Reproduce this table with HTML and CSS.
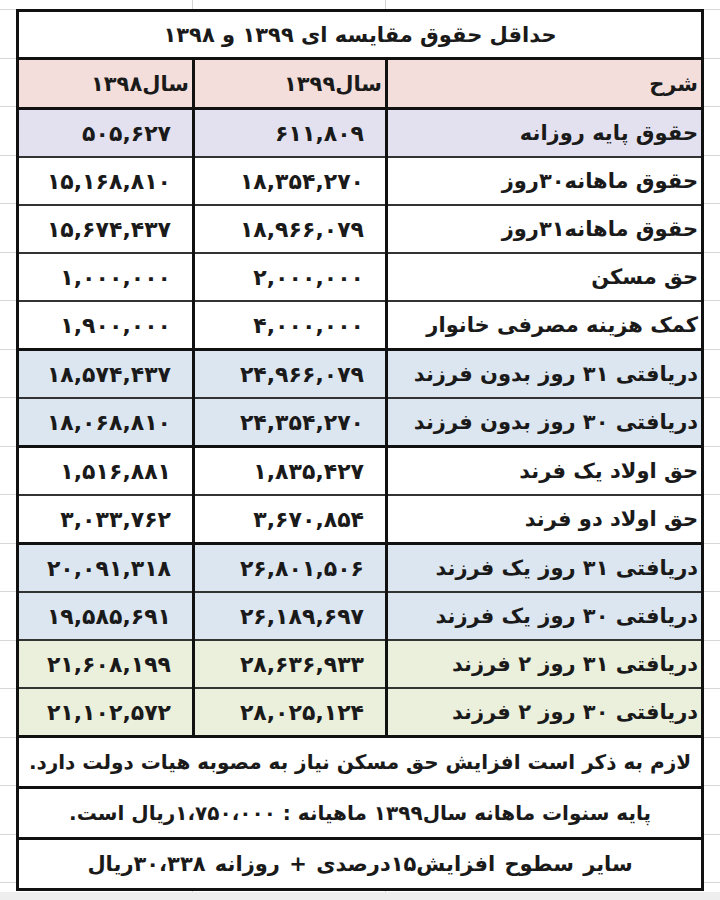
FILE: index.html
```html
<!DOCTYPE html>
<html lang="fa">
<head>
<meta charset="utf-8">
<title>حداقل حقوق مقایسه ای ۱۳۹۹ و ۱۳۹۸</title>
<link rel="stylesheet" href="styles.css">
</head>
<body>
<div class="sheet">
  <table class="wage" dir="rtl">
    <colgroup>
      <col class="c-desc">
      <col class="c-y99">
      <col class="c-y98">
    </colgroup>
    <tr class="title"><td colspan="3">حداقل حقوق مقایسه ای ۱۳۹۹ و ۱۳۹۸</td></tr>
    <tr class="head thick"><td>شرح</td><td>سال۱۳۹۹</td><td>سال۱۳۹۸</td></tr>
    <tr class="lav thick"><td>حقوق پایه روزانه</td><td class="num">۶۱۱,۸۰۹</td><td class="num">۵۰۵,۶۲۷</td></tr>
    <tr><td>حقوق ماهانه۳۰روز</td><td class="num">۱۸,۳۵۴,۲۷۰</td><td class="num">۱۵,۱۶۸,۸۱۰</td></tr>
    <tr><td>حقوق ماهانه۳۱روز</td><td class="num">۱۸,۹۶۶,۰۷۹</td><td class="num">۱۵,۶۷۴,۴۳۷</td></tr>
    <tr><td>حق مسکن</td><td class="num">۲,۰۰۰,۰۰۰</td><td class="num">۱,۰۰۰,۰۰۰</td></tr>
    <tr><td>کمک هزینه مصرفی خانوار</td><td class="num">۴,۰۰۰,۰۰۰</td><td class="num">۱,۹۰۰,۰۰۰</td></tr>
    <tr class="blue thick"><td>دریافتی ۳۱ روز بدون فرزند</td><td class="num">۲۴,۹۶۶,۰۷۹</td><td class="num">۱۸,۵۷۴,۴۳۷</td></tr>
    <tr class="blue"><td>دریافتی ۳۰ روز بدون فرزند</td><td class="num">۲۴,۳۵۴,۲۷۰</td><td class="num">۱۸,۰۶۸,۸۱۰</td></tr>
    <tr class="thick"><td>حق اولاد یک فرند</td><td class="num">۱,۸۳۵,۴۲۷</td><td class="num">۱,۵۱۶,۸۸۱</td></tr>
    <tr><td>حق اولاد دو فرند</td><td class="num">۳,۶۷۰,۸۵۴</td><td class="num">۳,۰۳۳,۷۶۲</td></tr>
    <tr class="blue thick"><td>دریافتی ۳۱ روز یک فرزند</td><td class="num">۲۶,۸۰۱,۵۰۶</td><td class="num">۲۰,۰۹۱,۳۱۸</td></tr>
    <tr class="blue"><td>دریافتی ۳۰ روز یک فرزند</td><td class="num">۲۶,۱۸۹,۶۹۷</td><td class="num">۱۹,۵۸۵,۶۹۱</td></tr>
    <tr class="green"><td>دریافتی ۳۱ روز ۲ فرزند</td><td class="num">۲۸,۶۳۶,۹۳۳</td><td class="num">۲۱,۶۰۸,۱۹۹</td></tr>
    <tr class="green"><td>دریافتی ۳۰ روز ۲ فرزند</td><td class="num">۲۸,۰۲۵,۱۲۴</td><td class="num">۲۱,۱۰۲,۵۷۲</td></tr>
    <tr class="note thick"><td colspan="3">لازم به ذکر است افزایش حق مسکن نیاز به مصوبه هیات دولت دارد.</td></tr>
    <tr class="note thick"><td colspan="3">پایه سنوات ماهانه سال۱۳۹۹ ماهیانه : ۱،۷۵۰،۰۰۰ریال است.</td></tr>
    <tr class="note thick"><td colspan="3" class="wide">سایر سطوح افزایش۱۵درصدی + روزانه ۳۰،۳۳۸ریال</td></tr>
  </table>
</div>
</body>
</html>
```

FILE: styles.css
```css
html, body {
  margin: 0;
  padding: 0;
}

body {
  width: 720px;
  height: 900px;
  overflow: hidden;
  background-color: #ffffff;
  background-image:
    linear-gradient(to bottom, transparent 892px, #eeeeee 892px),
    linear-gradient(to right, transparent 192px, #d4d4d4 192px, #d4d4d4 193px, transparent 193px),
    linear-gradient(to right, transparent 385px, #d4d4d4 385px, #d4d4d4 386px, transparent 386px),
    repeating-linear-gradient(to bottom, transparent 0, transparent 9px, #d8d8d8 9px, #d8d8d8 10px, transparent 10px, transparent 48.5px);
  font-family: "DejaVu Sans", sans-serif;
  color: #1a1a1a;
}

.sheet {
  padding: 9px 19px 0 16px;
}

.wage {
  width: 685px;
  table-layout: fixed;
  border-collapse: collapse;
  border: 3px solid #111;
  background: #fff;
}

.c-desc { width: 316px; }
.c-y99 { width: 193px; }
.c-y98 { width: 176px; }

.wage td {
  height: 46px;
  padding: 0 3px;
  border-left: 3px solid #111;
  border-right: 3px solid #111;
  border-top: 2px solid #333;
  border-bottom: 2px solid #333;
  font-size: 21px;
  font-weight: bold;
  text-align: right;
  vertical-align: middle;
  white-space: nowrap;
  overflow: hidden;
}

.wage tr.thick td {
  border-top: 3px solid #111;
}

.wage td.num {
  padding-right: 21px;
  font-size: 22px;
}

.wage tr.title td {
  text-align: center;
  font-size: 21px;
  height: 45px;
}

.wage tr.head td {
  background: #f3dedb;
  height: 47px;
  font-size: 21px;
}

.wage tr.lav td { background: #e3e1ef; }
.wage tr.blue td { background: #dce6f1; }
.wage tr.green td { background: #ebf0dd; }

.wage tr.note td {
  text-align: center;
  font-size: 20px;
  height: 48px;
}

.wage tr.note td.wide {
  font-size: 21px;
  word-spacing: 2px;
}
```
